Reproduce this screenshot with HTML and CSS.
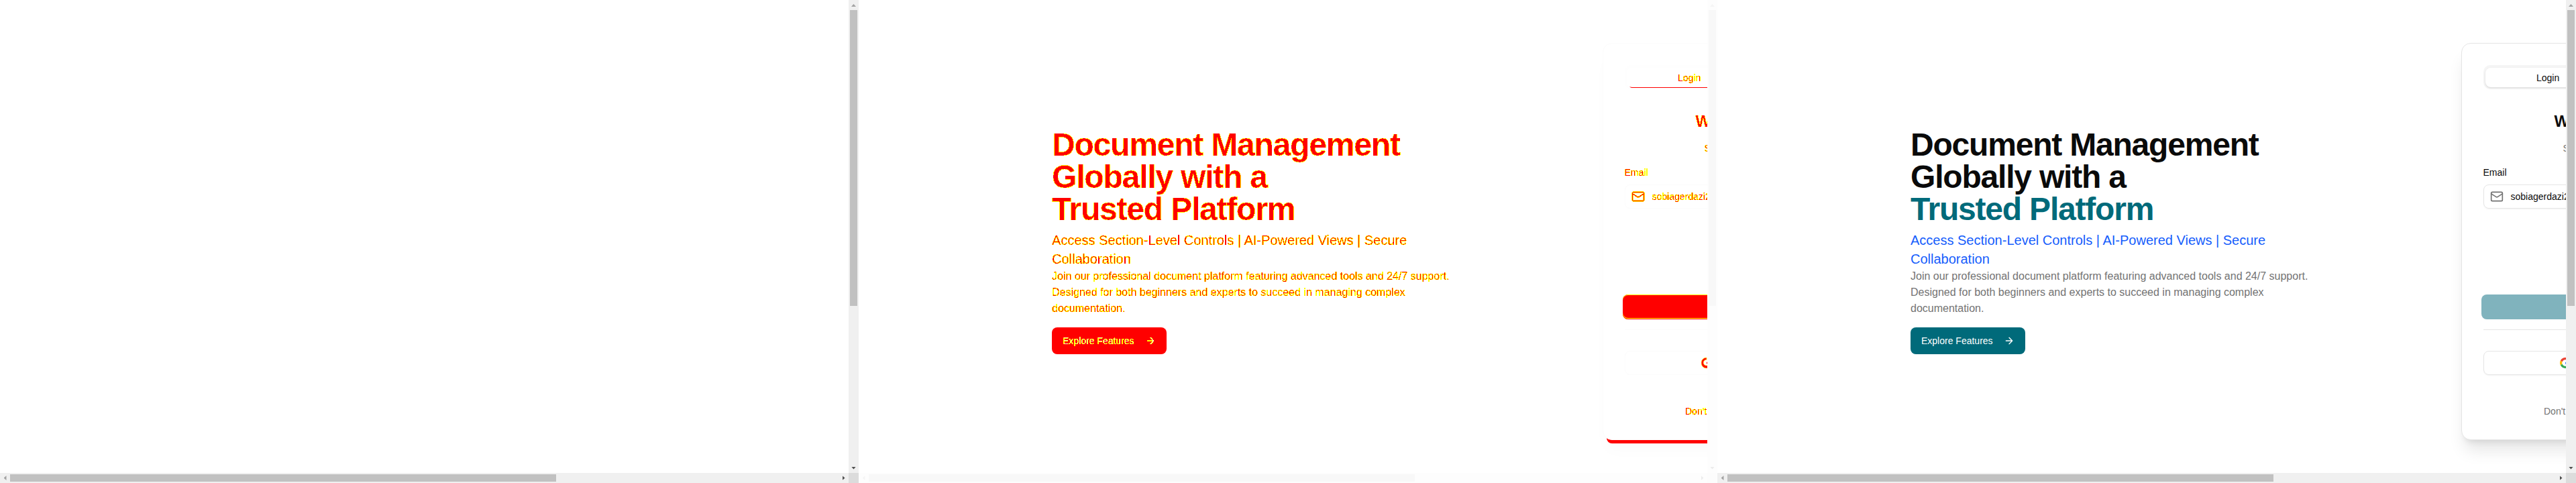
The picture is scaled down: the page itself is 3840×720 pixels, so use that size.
FILE: index.html
```html
<!DOCTYPE html>
<html lang="en">
<head>
<meta charset="utf-8">
<title>Document Management</title>
<link rel="stylesheet" href="styles.css">
</head>
<body>
<svg class="defs" width="0" height="0" aria-hidden="true">
  <filter id="edges" x="-5%" y="-20%" width="110%" height="140%" color-interpolation-filters="sRGB">
    <feComponentTransfer in="SourceAlpha" result="any"><feFuncA type="discrete" tableValues="0 1 1 1 1 1 1 1 1 1 1 1 1 1 1 1"/></feComponentTransfer>
    <feFlood flood-color="#ff0"/><feComposite in2="any" operator="in" result="rim"/>
    <feComponentTransfer in="SourceAlpha" result="full"><feFuncA type="discrete" tableValues="0 0 0 0 0 0 0 0 0 0 0 0 0 1 1 1"/></feComponentTransfer>
    <feFlood flood-color="#f00"/><feComposite in2="full" operator="in" result="core"/>
    <feMerge><feMergeNode in="rim"/><feMergeNode in="core"/></feMerge>
  </filter>
  <filter id="edges-light" x="-5%" y="-20%" width="110%" height="140%" color-interpolation-filters="sRGB">
    <feComponentTransfer in="SourceAlpha" result="any"><feFuncA type="discrete" tableValues="0 0 1 1 1 1 1 1 1 1"/></feComponentTransfer>
    <feFlood flood-color="#ff0"/><feComposite in2="any" operator="in" result="rim"/>
    <feComponentTransfer in="SourceAlpha" result="full"><feFuncA type="discrete" tableValues="0 0 0 0 0 0 0 0 0 1"/></feComponentTransfer>
    <feFlood flood-color="#fff6d0"/><feComposite in2="full" operator="in" result="core"/>
    <feMerge><feMergeNode in="rim"/><feMergeNode in="core"/></feMerge>
  </filter>
</svg>
<main class="panels">
  <section class="panel">
    <div class="view"></div>
    <div class="bar bar-y"><i class="arrow up"></i><i class="thumb"></i><i class="arrow down"></i></div>
    <div class="bar bar-x"><i class="arrow left"></i><i class="thumb"></i><i class="arrow right"></i></div>
    <div class="corner"></div>
  </section>

  <section class="panel diff">
    <div class="view">
      <div class="hero">
        <h1 class="title"><span>Document Management</span><span>Globally with a</span><span class="accent">Trusted Platform</span></h1>
        <p class="tagline"><span>Access Section-Level Controls | AI-Powered Views | Secure</span><span>Collaboration</span></p>
        <p class="lead"><span>Join our professional document platform featuring advanced tools and 24/7 support.</span><span>Designed for both beginners and experts to succeed in managing complex</span><span>documentation.</span></p>
        <button class="explore"><span>Explore Features</span><svg width="16" height="16" viewBox="0 0 24 24"><path d="M5 12h14M12 5l7 7-7 7"/></svg></button>
      </div>
      <div class="card">
        <div class="tabs"><div class="tab"><span class="ink">Login</span></div></div>
        <h2 class="welcome ink">W</h2>
        <p class="hint ink">S</p>
        <div class="label ink">Email</div>
        <div class="field"><svg class="ink" width="20" height="20" viewBox="0 0 24 24"><rect x="2" y="4" width="20" height="16" rx="2"/><path d="m22 7-8.97 5.7a1.94 1.94 0 0 1-2.06 0L2 7"/></svg><span class="ink">sobiagerdazi2</span></div>
        <div class="submit"></div>
        <div class="rule"></div>
        <div class="google"><svg width="16" height="16" viewBox="0 0 24 24"><path fill="#f00" stroke="#ff0" d="M12 0a12 12 0 1 0 12 12h-6a6.500 6.500 0 1 1-6-7z"/><path fill="#f00" d="M12 10h8v4h-8z"/></svg></div>
        <p class="signup ink">Don't</p>
      </div>
    </div>
    <div class="bar bar-y"><i class="arrow up"></i><i class="thumb"></i><i class="arrow down"></i></div>
    <div class="bar bar-x"><i class="arrow left"></i><i class="thumb"></i><i class="arrow right"></i></div>
    <div class="corner"></div>
  </section>

  <section class="panel">
    <div class="view">
      <div class="hero">
        <h1 class="title"><span>Document Management</span><span>Globally with a</span><span class="accent">Trusted Platform</span></h1>
        <p class="tagline"><span>Access Section-Level Controls | AI-Powered Views | Secure</span><span>Collaboration</span></p>
        <p class="lead"><span>Join our professional document platform featuring advanced tools and 24/7 support.</span><span>Designed for both beginners and experts to succeed in managing complex</span><span>documentation.</span></p>
        <button class="explore"><span>Explore Features</span><svg width="16" height="16" viewBox="0 0 24 24"><path d="M5 12h14M12 5l7 7-7 7"/></svg></button>
      </div>
      <div class="card">
        <div class="tabs"><div class="tab"><span>Login</span></div></div>
        <h2 class="welcome">W</h2>
        <p class="hint">S</p>
        <div class="label">Email</div>
        <div class="field"><svg width="20" height="20" viewBox="0 0 24 24"><rect x="2" y="4" width="20" height="16" rx="2"/><path d="m22 7-8.970 5.700a1.940 1.940 0 0 1-2.060 0L2 7"/></svg><span>sobiagerdazi2</span></div>
        <div class="submit"></div>
        <div class="rule"></div>
        <div class="google"><svg width="16" height="16" viewBox="0 0 48 48"><path fill="#EA4335" d="M24 9.500c3.540 0 6.710 1.220 9.210 3.600l6.850-6.850C35.900 2.380 30.470 0 24 0 14.620 0 6.510 5.380 2.560 13.220l7.980 6.190C12.430 13.720 17.740 9.500 24 9.500z"/><path fill="#4285F4" d="M46.980 24.550c0-1.570-.15-3.090-.38-4.550H24v9.020h12.940c-.58 2.960-2.260 5.480-4.780 7.180l7.730 6c4.510-4.180 7.090-10.360 7.090-17.650z"/><path fill="#FBBC05" d="M10.530 28.590a14.500 14.500 0 0 1 0-9.180l-7.980-6.190a24 24 0 0 0 0 21.560z"/><path fill="#34A853" d="M24 48c6.480 0 11.930-2.130 15.890-5.810l-7.730-6c-2.150 1.450-4.920 2.300-8.160 2.300-6.260 0-11.570-4.220-13.470-9.910l-7.980 6.190C6.510 42.620 14.620 48 24 48z"/></svg></div>
        <p class="signup">Don't</p>
      </div>
    </div>
    <div class="bar bar-y"><i class="arrow up"></i><i class="thumb"></i><i class="arrow down"></i></div>
    <div class="bar bar-x"><i class="arrow left"></i><i class="thumb"></i><i class="arrow right"></i></div>
    <div class="corner"></div>
  </section>
</main>
</body>
</html>
```
FILE: styles.css
```css
* { box-sizing: border-box; }
body { margin: 0; background: #fff; font-family: "Liberation Sans", Arial, sans-serif; color: #0a0a0a; overflow: hidden; }
h1, h2, p { margin: 0; font-weight: 400; }
.defs { display: block; height: 0; }
.panels { display: grid; grid-template-columns: repeat(3, 1280px); height: 720px; }
.panel { display: grid; grid-template-columns: 1265px 15px; grid-template-rows: 705px 15px; }
.view { display: flex; align-items: flex-start; overflow: hidden; background: #fff; white-space: nowrap; }

/* Hero copy */
.hero { flex: none; width: 820.5px; margin-left: 288px; padding-top: 192px; }
.hero span { display: block; width: max-content; }
.title { font-size: 48px; line-height: 48px; font-weight: 700; letter-spacing: -1.2px; }
.accent { color: #006a7a; }
.tagline { margin-top: 8px; font-size: 20px; line-height: 28px; color: #155dfc; }
.lead { font-size: 16px; line-height: 24px; color: #737373; }
.explore { display: flex; align-items: center; justify-content: space-between; width: 171px; height: 40px; margin-top: 16px; padding: 0 16px; border: 0; border-radius: 8px; background: #006a7a; color: #fff; font: 14px/20px "Liberation Sans", Arial, sans-serif; }
.explore svg, .field svg { flex: none; fill: none; stroke: currentColor; stroke-width: 2; stroke-linecap: round; stroke-linejoin: round; }

/* Login card */
.card { flex: none; width: 450px; height: 592px; margin-top: 64px; padding: 32px; border: 1px solid #e5e5e5; border-radius: 14px; background: #fff; box-shadow: 0 20px 25px -5px rgba(0,0,0,.1), 0 8px 10px -6px rgba(0,0,0,.1); font-size: 14px; line-height: 20px; }
.tabs { height: 36px; padding: 3.5px 3px; border-radius: 10px; background: #f5f5f5; }
.tab { height: 29px; padding: 5px 0 0 76.5px; border-radius: 8px; background: #fff; box-shadow: 0 1px 3px rgba(0,0,0,.1), 0 1px 2px -1px rgba(0,0,0,.1); }
.tab span { display: block; width: max-content; }
.welcome { margin: 32px 0 0 106px; font-size: 24px; line-height: 32px; font-weight: 700; }
.hint { margin: 14px 0 0 119px; color: #737373; }
.label { width: max-content; margin-top: 16px; }
.field { display: flex; align-items: center; gap: 11px; height: 36px; margin-top: 8px; padding-left: 9px; border: 1px solid #e5e5e5; border-radius: 8px; box-shadow: 0 1px 2px rgba(0,0,0,.05); }
.field svg { color: #737373; }
.submit { width: 400px; height: 37px; margin: 128px 0 0 -2.5px; border-radius: 8px; background: #80b3bd; }
.rule { height: 1px; margin-top: 15px; background: #e5e5e5; }
.google { height: 36px; margin-top: 31px; padding: 9px 0 0 113.5px; border: 1px solid #e5e5e5; border-radius: 8px; box-shadow: 0 1px 2px rgba(0,0,0,.05); }
.google svg { display: block; }
.signup { margin: 44px 0 0 90.5px; color: #737373; }

/* Scrollbars */
.bar { display: flex; background: #f0f0f0; }
.bar-y { flex-direction: column; align-items: center; }
.bar-x { align-items: center; }
.corner { background: #dcdcdc; }
.thumb { background: #c1c1c1; }
.bar-y .thumb { width: 11px; height: 441px; }
.bar-x .thumb { width: 814px; height: 11px; }
.arrow { display: grid; place-items: center; flex: none; width: 15px; height: 15px; }
.arrow::before { content: ""; width: 7px; height: 4px; background: #505050; clip-path: polygon(0 0, 100% 0, 50% 100%); }
.up::before { background: #a3a3a3; transform: rotate(180deg); }
.left::before { background: #a3a3a3; width: 4px; height: 7px; clip-path: polygon(0 50%, 100% 0, 100% 100%); }
.right::before { width: 4px; height: 7px; clip-path: polygon(0 0, 100% 50%, 0 100%); }
.down { margin-top: auto; }
.right { margin-left: auto; }

/* Change-highlight panel */
.diff .hero span, .diff .ink { color: #000; filter: url(#edges); }
.diff .ink { width: max-content; }
.diff .field svg { width: 20px; }
.diff .explore { background: #f00; }
.diff .explore span, .diff .explore svg { color: #fff; filter: url(#edges-light); }
.diff .card { border-color: #fcfcfc; box-shadow: 0 11px 0 -6px #f00, 0 20px 25px -5px rgba(0,0,0,.02); }
.diff .tabs { background: #fefefe; }
.diff .tab { box-shadow: 0 5px 0 -4px #f00; }
.diff .field, .diff .google { border-color: #fcfcfc; box-shadow: none; }
.diff .submit { background: #f00; box-shadow: inset 0 1px #ff0, inset 0 -1px #f00, inset 0 -2px #ff0; }
.diff .rule { background: #fcfcfc; }
.diff .bar { background: #fdfdfd; }
.diff .corner { background: #fcfcfc; }
.diff .thumb { background: #f8f8f8; }
.diff .arrow::before { background: #ececec; }
.diff .up::before, .diff .left::before { background: #f5f5f5; }
```
